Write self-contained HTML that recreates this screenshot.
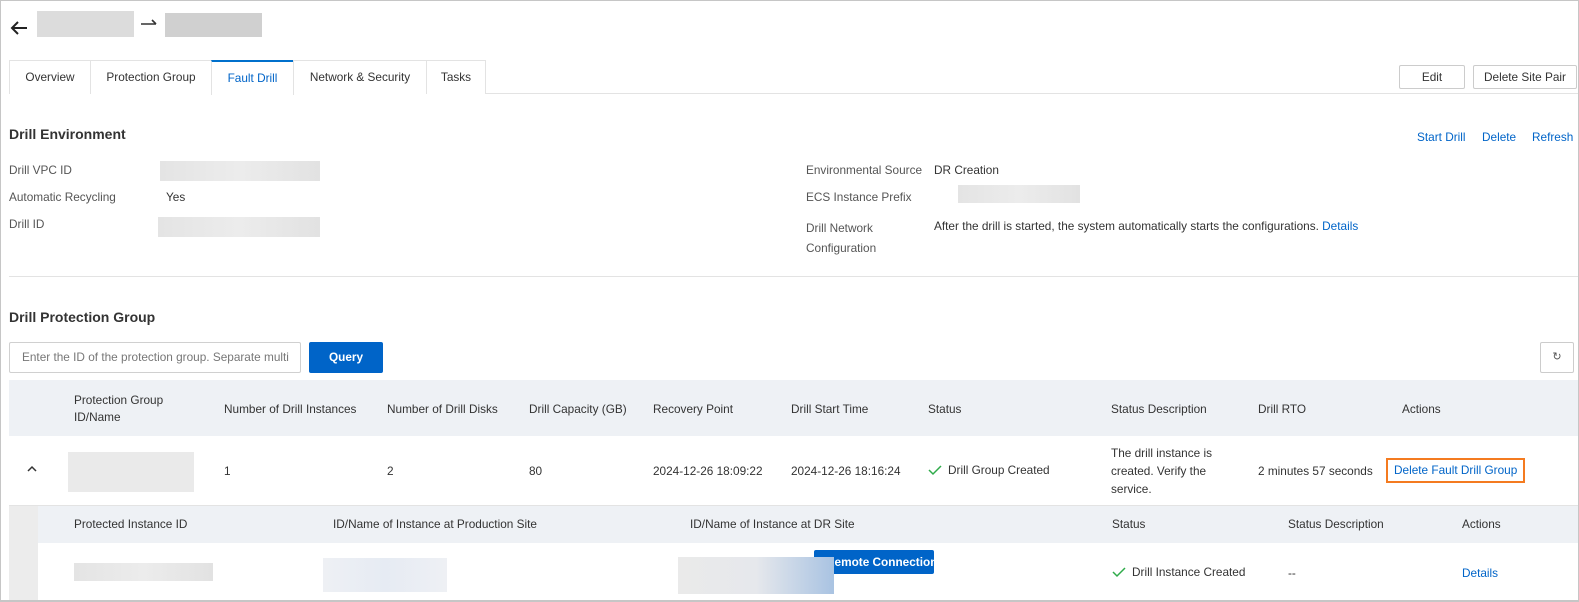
<!DOCTYPE html>
<html><head><meta charset="utf-8"><style>
*{margin:0;padding:0;box-sizing:border-box}
body{width:1579px;height:602px;overflow:hidden;background:#fff;font-family:"Liberation Sans",sans-serif;font-size:11.8px;color:#333;position:relative}
.frame{position:absolute;left:0;top:0;width:1579px;height:602px;border:1px solid #c6c6c6;border-bottom:2px solid #c6c6c6;pointer-events:none;z-index:10}
.a{position:absolute;white-space:nowrap}
.blur{position:absolute;background:linear-gradient(90deg,#e4e4e4,#ececec,#e2e2e2)}
.lbl{color:#555}
.blue{color:#0064c8}
.tab{position:absolute;top:60px;height:34px;border:1px solid #e3e3e3;border-bottom:none;line-height:33px;text-align:center;color:#333;background:#fff}
.btn{position:absolute;height:24px;border:1px solid #ccc;border-radius:2px;line-height:22px;text-align:center;background:#fff;color:#333}
.h{font-weight:bold;font-size:14px;color:#333}
</style></head><body>
<div class="frame"></div>
<svg class="a" style="left:9px;top:18px" width="20" height="20" viewBox="0 0 20 20"><path d="M18 10H3M9 4L3 10l6 6" fill="none" stroke="#222" stroke-width="2"/></svg>
<div class="blur" style="left:37px;top:11px;width:97px;height:26px;background:#dcdcdc"></div>
<svg class="a" style="left:140px;top:16px" width="20" height="14"><path d="M1 8H16M12 4l4 4" fill="none" stroke="#333" stroke-width="1.6"/></svg>
<div class="blur" style="left:165px;top:13px;width:97px;height:24px;background:#d0d0d0"></div>
<div style="position:absolute;left:9px;top:93px;width:1570px;border-top:1px solid #e3e3e3"></div>
<div class="tab" style="left:9px;width:82px">Overview</div>
<div class="tab" style="left:90px;width:122px">Protection Group</div>
<div class="tab" style="left:211px;width:83px;color:#0064c8;border-top:2px solid #0070cc;height:35px;line-height:32px">Fault Drill</div>
<div class="tab" style="left:293px;width:134px">Network &amp; Security</div>
<div class="tab" style="left:426px;width:60px">Tasks</div>
<div class="btn" style="left:1399px;top:65px;width:66px">Edit</div>
<div class="btn" style="left:1473px;top:65px;width:104px">Delete Site Pair</div>
<div class="a h" style="left:9px;top:126px">Drill Environment</div>
<div class="a blue" style="left:1417px;top:130px">Start Drill</div>
<div class="a blue" style="left:1482px;top:130px">Delete</div>
<div class="a blue" style="left:1532px;top:130px">Refresh</div>
<div class="a lbl" style="left:9px;top:163px">Drill VPC ID</div>
<div class="blur" style="left:160px;top:161px;width:160px;height:20px"></div>
<div class="a lbl" style="left:9px;top:190px">Automatic Recycling</div>
<div class="a" style="left:166px;top:190px">Yes</div>
<div class="a lbl" style="left:9px;top:217px">Drill ID</div>
<div class="blur" style="left:158px;top:217px;width:162px;height:20px"></div>
<div class="a lbl" style="left:806px;top:163px">Environmental Source</div>
<div class="a" style="left:934px;top:163px">DR Creation</div>
<div class="a lbl" style="left:806px;top:190px">ECS Instance Prefix</div>
<div class="blur" style="left:958px;top:185px;width:122px;height:18px"></div>
<div class="a lbl" style="left:806px;top:218px;line-height:20px;white-space:normal;width:100px">Drill Network Configuration</div>
<div class="a" style="left:934px;top:219px">After the drill is started, the system automatically starts the configurations. <span class="blue">Details</span></div>
<div style="position:absolute;left:9px;top:276px;width:1570px;border-top:1px solid #e3e3e3"></div>
<div class="a h" style="left:9px;top:309px">Drill Protection Group</div>
<div class="a" style="left:9px;top:342px;width:292px;height:31px;border:1px solid #d0d0d0;border-radius:2px;line-height:29px;padding-left:12px;color:#777">Enter the ID of the protection group. Separate multi</div>
<div class="a" style="left:309px;top:342px;width:74px;height:31px;background:#0064c8;color:#fff;font-weight:bold;text-align:center;line-height:31px;border-radius:2px">Query</div>
<div class="btn" style="left:1540px;top:342px;width:34px;height:31px;line-height:29px;font-size:11px;color:#555">↻</div>
<div style="position:absolute;left:9px;top:380px;width:1570px;height:56px;background:#eef1f5"></div>
<div class="a" style="left:74px;top:392px;line-height:17px">Protection Group<br>ID/Name</div>
<div class="a" style="left:224px;top:402px">Number of Drill Instances</div>
<div class="a" style="left:387px;top:402px">Number of Drill Disks</div>
<div class="a" style="left:529px;top:402px">Drill Capacity (GB)</div>
<div class="a" style="left:653px;top:402px">Recovery Point</div>
<div class="a" style="left:791px;top:402px">Drill Start Time</div>
<div class="a" style="left:928px;top:402px">Status</div>
<div class="a" style="left:1111px;top:402px">Status Description</div>
<div class="a" style="left:1258px;top:402px">Drill RTO</div>
<div class="a" style="left:1402px;top:402px">Actions</div>
<svg class="a" style="left:26px;top:464px" width="12" height="10"><path d="M2 7l4-4 4 4" fill="none" stroke="#333" stroke-width="1.5"/></svg>
<div class="blur" style="left:68px;top:452px;width:126px;height:40px;background:#eaeaea"></div>
<div class="a" style="left:224px;top:464px">1</div>
<div class="a" style="left:387px;top:464px">2</div>
<div class="a" style="left:529px;top:464px">80</div>
<div class="a" style="left:653px;top:464px">2024-12-26 18:09:22</div>
<div class="a" style="left:791px;top:464px">2024-12-26 18:16:24</div>
<svg class="a" style="left:928px;top:464px" width="14" height="12"><path d="M1 6l4 4 8-8" fill="none" stroke="#2fab4a" stroke-width="1.5"/></svg>
<div class="a" style="left:948px;top:463px">Drill Group Created</div>
<div class="a" style="left:1111px;top:444px;line-height:18px">The drill instance is<br>created. Verify the<br>service.</div>
<div class="a" style="left:1258px;top:464px">2 minutes 57 seconds</div>
<div class="a blue" style="left:1386px;top:458px;width:139px;height:25px;border:2px solid #f47b20;line-height:21px;padding-left:6px">Delete Fault Drill Group</div>
<div style="position:absolute;left:9px;top:505px;width:1570px;height:1px;background:#e3e3e3"></div>
<div style="position:absolute;left:9px;top:506px;width:29px;height:96px;background:#ececec"></div>
<div style="position:absolute;left:38px;top:506px;width:1541px;height:37px;background:#eef1f5"></div>
<div class="a" style="left:74px;top:517px">Protected Instance ID</div>
<div class="a" style="left:333px;top:517px">ID/Name of Instance at Production Site</div>
<div class="a" style="left:690px;top:517px">ID/Name of Instance at DR Site</div>
<div class="a" style="left:1112px;top:517px">Status</div>
<div class="a" style="left:1288px;top:517px">Status Description</div>
<div class="a" style="left:1462px;top:517px">Actions</div>
<div class="blur" style="left:74px;top:563px;width:139px;height:18px"></div>
<div class="blur" style="left:323px;top:558px;width:124px;height:34px;background:linear-gradient(90deg,#eef0f4,#e6ebf3,#eef0f4)"></div>
<div class="a" style="left:814px;top:550px;width:120px;height:24px;background:#0064c8;color:#fff;font-weight:bold;line-height:24px;padding-left:12px;border-radius:2px">Remote Connection</div>
<div class="a" style="left:826px;top:577px;color:#c77a00">n</div>
<div class="blur" style="left:678px;top:557px;width:156px;height:37px;background:linear-gradient(90deg,#eaeaea,#e6e8ec,#a9c3e2)"></div>
<svg class="a" style="left:1112px;top:566px" width="14" height="12"><path d="M1 6l4 4 8-8" fill="none" stroke="#2fab4a" stroke-width="1.5"/></svg>
<div class="a" style="left:1132px;top:565px">Drill Instance Created</div>
<div class="a" style="left:1288px;top:566px">--</div>
<div class="a blue" style="left:1462px;top:566px">Details</div>
</body></html>
